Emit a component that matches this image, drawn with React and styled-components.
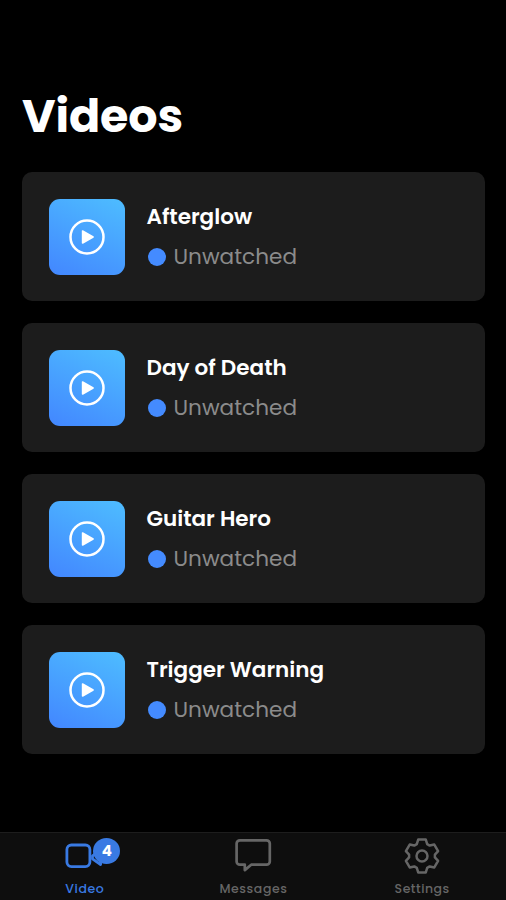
import React, { useState } from 'react'
import styled, { createGlobalStyle } from 'styled-components';

const GlobalStyle = createGlobalStyle`
body {
  margin: 0;
  background: #000;
  font-family: Poppins, Inter, "Liberation Sans", sans-serif;
}
* {
  box-sizing: border-box;
}
`;

const Screen = styled.div`
display: flex;
flex-direction: column;
width: 100%;
height: 100vh;
overflow: hidden;
background: #000;
`;

const Content = styled.main`
flex: 1;
padding: 86px 21px 0 22px;
`;

const Title = styled.h1`
margin: 0 0 26px;
height: 60px;
line-height: 60px;
font-size: 46px;
font-weight: 700;
letter-spacing: -0.1px;
color: #fff;
`;

const List = styled.div`
display: flex;
flex-direction: column;
gap: 22px;
`;

const Card = styled.div`
display: flex;
align-items: center;
height: 129px;
padding: 0 27px;
border-radius: 10px;
background: #1c1c1c;
`;

const Thumb = styled.div`
display: flex;
align-items: center;
justify-content: center;
width: 76px;
height: 76px;
margin-right: 21.5px;
border-radius: 11px;
background: linear-gradient(25deg, #4389ff 5%, #4dbaff 95%);
`;

const Name = styled.div`
height: 34px;
line-height: 34px;
font-size: 21.5px;
font-weight: 600;
white-space: nowrap;
color: #fff;
`;

const Status = styled.div`
display: flex;
align-items: center;
gap: 8px;
height: 34px;
margin-top: 6px;
font-size: 21.6px;
color: #8b8b8b;
`;

const Dot = styled.span`
width: 18px;
height: 18px;
margin-left: 1px;
border-radius: 50%;
background: #448bff;
`;

const TabBar = styled.nav`
display: grid;
grid-template-columns: repeat(3, 1fr);
height: 68px;
border-top: 1px solid #1d1d1d;
background: #0e0e0e;
`;

const Tab = styled.button`
display: flex;
flex-direction: column;
align-items: center;
padding: 4px 0 0;
border: none;
background: none;
font-family: inherit;
font-size: 12.5px;
font-weight: 500;
line-height: 18px;
color: ${props => props.$active ? '#397ae3' : '#666'};
cursor: pointer;
`;

const TabIcon = styled.div`
position: relative;
width: 38px;
height: 38px;
margin-bottom: 5px;
svg {
  display: block;
}
`;

const TabLabel = styled.span`
padding-left: 1px;
letter-spacing: ${props => props.$spacing || 0}px;
white-space: nowrap;
`;

const Badge = styled.span`
position: absolute;
top: 1px;
left: 28px;
width: 27px;
height: 26px;
border-radius: 50%;
background: #397ae3;
color: #fff;
font-size: 15px;
font-weight: 700;
line-height: 26px;
text-align: center;
`;

// outline of a six tooth gear around 0,0
const tooth = [[-5.2, -11.9], [-3.8, -16.4], [3.8, -16.4], [5.2, -11.9]];
const gearPoints = [0, 60, 120, 180, 240, 300].map(deg => {
  const a = deg * Math.PI / 180;
  return tooth.map(([x, y]) => [
    (x * Math.cos(a) - y * Math.sin(a)).toFixed(2),
    (x * Math.sin(a) + y * Math.cos(a)).toFixed(2),
  ].join(',')).join(' ');
}).join(' ');

const PlayIcon = () => (
  <svg width="36" height="36" viewBox="0 0 36 36">
    <circle cx="18" cy="18" r="16.5" fill="none" stroke="#fff" strokeWidth="2.5" />
    <path d="M13.6 12v12L24.1 18z" fill="#fff" stroke="#fff" strokeWidth="1.6" strokeLinejoin="round" />
  </svg>
)

const VideoIcon = () => (
  <svg width="38" height="38" viewBox="0 0 38 38" fill="none" stroke="currentColor" strokeWidth="2.8" strokeLinejoin="round">
    <rect x="1.9" y="8" width="23" height="21.6" rx="4.5" />
    <path d="M27.5 18.8L35.6 13V27.6L27.5 21.8z" />
  </svg>
)

const MessageIcon = () => (
  <svg width="38" height="38" viewBox="0 0 38 38" fill="none" stroke="currentColor" strokeWidth="2.7" strokeLinejoin="round">
    <path d="M5.9 3.3h26.6a3.3 3.3 0 0 1 3.3 3.3v17.8a3.3 3.3 0 0 1-3.3 3.3H17.2l-6.4 5.4v-5.4H5.9a3.3 3.3 0 0 1-3.3-3.3V6.6a3.3 3.3 0 0 1 3.3-3.3z" />
  </svg>
)

const SettingsIcon = () => (
  <svg width="38" height="38" viewBox="-19 -19 38 38" fill="none" stroke="currentColor" strokeWidth="2.5" strokeLinejoin="round">
    <polygon points={gearPoints} />
    <circle r="5.5" />
  </svg>
)

const videos = ['Afterglow', 'Day of Death', 'Guitar Hero', 'Trigger Warning'];

const tabs = [
  { name: 'Video', icon: VideoIcon, badge: 4, spacing: 0.6 },
  { name: 'Messages', icon: MessageIcon, spacing: 0.6 },
  { name: 'Settings', icon: SettingsIcon, spacing: 0.5 },
];

export default function App() {
  const [active, setActive] = useState('Video');

  return (
    <Screen>
      <GlobalStyle />
      <Content>
        <Title>Videos</Title>
        <List>
          {videos.map(name => (
            <Card key={name}>
              <Thumb><PlayIcon /></Thumb>
              <div>
                <Name>{name}</Name>
                <Status><Dot />Unwatched</Status>
              </div>
            </Card>
          ))}
        </List>
      </Content>
      <TabBar>
        {tabs.map(tab => (
          <Tab key={tab.name} $active={active === tab.name} onClick={() => setActive(tab.name)}>
            <TabIcon>
              <tab.icon />
              {tab.badge && <Badge>{tab.badge}</Badge>}
            </TabIcon>
            <TabLabel $spacing={tab.spacing}>{tab.name}</TabLabel>
          </Tab>
        ))}
      </TabBar>
    </Screen>
  )
}
